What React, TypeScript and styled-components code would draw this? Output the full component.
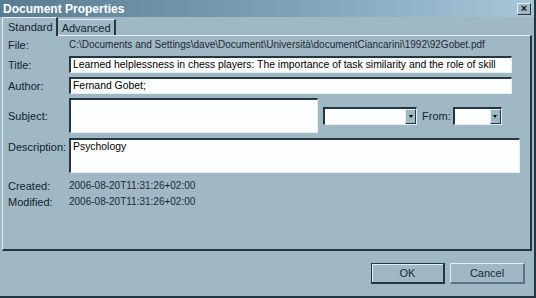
import styled, { createGlobalStyle } from "styled-components";

const Face = "#a0b7c4";
const Light = "#e4eef4";
const Shadow = "#5d7382";
const Dark = "#253640";

const GlobalStyle = createGlobalStyle`
  html, body {
    margin: 0;
    padding: 0;
    background: ${Face};
  }
  * {
    box-sizing: border-box;
  }
`;

const Window = styled.div`
  width: 536px;
  height: 298px;
  display: flex;
  flex-direction: column;
  background: ${Face};
  border-right: 2px solid ${Dark};
  border-bottom: 2px solid ${Dark};
  font-family: "Liberation Sans", Arial, sans-serif;
  color: #14232c;
  overflow: hidden;
`;

const TitleBar = styled.div`
  height: 17px;
  flex: none;
  display: flex;
  align-items: center;
  justify-content: space-between;
  padding: 0 3px 0 3px;
  background: linear-gradient(to right, #5a7c93 0%, #7fa2b9 55%, #a8c6d9 100%);
  color: #fff;
  font-size: 12px;
  font-weight: 700;
`;

const CloseButton = styled.div`
  width: 14px;
  height: 12px;
  display: flex;
  align-items: center;
  justify-content: center;
  background: ${Face};
  border-top: 1px solid ${Light};
  border-left: 1px solid ${Light};
  border-right: 1px solid ${Dark};
  border-bottom: 1px solid ${Dark};
  color: #111;
  font-size: 11px;
  font-weight: 700;
  line-height: 1;
`;

const Body = styled.div`
  padding: 0 2px 0 2px;
  display: flex;
  flex-direction: column;
`;

const TabStrip = styled.div`
  height: 18px;
  display: flex;
  align-items: flex-end;
  position: relative;
  z-index: 1;
`;

const Tab = styled.div<{ $active?: boolean }>`
  height: ${(p) => (p.$active ? "19px" : "16px")};
  margin-bottom: ${(p) => (p.$active ? "-1px" : "0")};
  padding: 0 3px 0 ${(p) => (p.$active ? "5px" : "3px")};
  display: flex;
  align-items: center;
  font-size: 11px;
  background: ${Face};
  border-top: 1px solid ${Light};
  border-left: 1px solid ${(p) => (p.$active ? Light : "transparent")};
  border-right: 2px solid ${Dark};
`;

const Panel = styled.div`
  height: 216px;
  border-top: 1px solid ${Light};
  border-left: 1px solid ${Light};
  border-right: 2px solid ${Dark};
  border-bottom: 2px solid ${Dark};
  padding: 2px 0 0 5px;
  display: flex;
  flex-direction: column;
`;

const Row = styled.div<{ $top?: number; $align?: string }>`
  display: flex;
  align-items: ${(p) => p.$align ?? "center"};
  margin-top: ${(p) => p.$top ?? 0}px;
`;

const Label = styled.div<{ $pad?: number }>`
  width: 61px;
  flex: none;
  font-size: 11px;
  line-height: 14px;
  padding-top: ${(p) => p.$pad ?? 0}px;
`;

const Value = styled.div`
  font-size: 10px;
  line-height: 14px;
  color: #1c2a33;
  white-space: nowrap;
`;

const Field = styled.div<{ $w: number; $h: number }>`
  width: ${(p) => p.$w}px;
  height: ${(p) => p.$h}px;
  flex: none;
  background: #fdfeff;
  border-top: 2px solid ${Dark};
  border-left: 2px solid ${Dark};
  border-right: 1px solid ${Light};
  border-bottom: 1px solid ${Light};
  padding: 0 2px;
  font-size: 10.4px;
  line-height: 14px;
  color: #000;
  white-space: nowrap;
  overflow: hidden;
`;

const Select = styled.div<{ $w: number; $gap: number }>`
  width: ${(p) => p.$w}px;
  height: 18px;
  margin-left: ${(p) => p.$gap}px;
  display: flex;
  justify-content: flex-end;
  background: #fdfeff;
  border-top: 2px solid ${Dark};
  border-left: 2px solid ${Dark};
  border-right: 1px solid ${Light};
  border-bottom: 1px solid ${Light};
`;

const Arrow = styled.div`
  width: 11px;
  height: 15px;
  display: flex;
  align-items: center;
  justify-content: center;
  background: ${Face};
  border-top: 1px solid ${Light};
  border-left: 1px solid ${Light};
  border-right: 1px solid ${Dark};
  border-bottom: 1px solid ${Dark};
  &::after {
    content: "";
    border-left: 2px solid transparent;
    border-right: 2px solid transparent;
    border-top: 3px solid #000;
  }
`;

const FromLabel = styled.div`
  margin-left: 5px;
  font-size: 11px;
`;

const Footer = styled.div`
  flex: 1;
  display: flex;
  justify-content: flex-end;
  gap: 5px;
  padding: 12px 9px 0 0;
`;

const Button = styled.div<{ $default?: boolean }>`
  width: ${(p) => (p.$default ? 74 : 75)}px;
  height: 21px;
  display: flex;
  align-items: center;
  justify-content: center;
  font-size: 11px;
  color: #1a2a33;
  background: ${Face};
  border-top: 1px solid ${(p) => (p.$default ? Dark : Light)};
  border-left: 1px solid ${(p) => (p.$default ? Dark : Light)};
  border-right: 2px solid ${(p) => (p.$default ? Dark : Shadow)};
  border-bottom: 2px solid ${(p) => (p.$default ? Dark : Shadow)};
  box-shadow: ${(p) => (p.$default ? `inset 1px 1px 0 ${Light}` : "none")};
`;

export default function App() {
  return (
    <>
      <GlobalStyle />
      <Window>
        <TitleBar>
          <span>Document Properties</span>
          <CloseButton>×</CloseButton>
        </TitleBar>
        <Body>
          <TabStrip>
            <Tab $active>Standard</Tab>
            <Tab>Advanced</Tab>
          </TabStrip>
          <Panel>
            <Row>
              <Label>File:</Label>
              <Value>
                C:\Documents and Settings\dave\Document\Università\documentCiancarini\1992\92Gobet.pdf
              </Value>
            </Row>
            <Row $top={4}>
              <Label>Title:</Label>
              <Field $w={443} $h={17}>
                Learned helplessness in chess players: The importance of task similarity and the role of skill
              </Field>
            </Row>
            <Row $top={4}>
              <Label>Author:</Label>
              <Field $w={443} $h={17}>
                Fernand Gobet;
              </Field>
            </Row>
            <Row $top={4}>
              <Label>Subject:</Label>
              <Field $w={249} $h={35} />
              <Select $w={94} $gap={5}>
                <Arrow />
              </Select>
              <FromLabel>From:</FromLabel>
              <Select $w={49} $gap={2}>
                <Arrow />
              </Select>
            </Row>
            <Row $top={5} $align="flex-start">
              <Label $pad={2}>Description:</Label>
              <Field $w={451} $h={35}>
                Psychology
              </Field>
            </Row>
            <Row $top={6}>
              <Label>Created:</Label>
              <Value>2006-08-20T11:31:26+02:00</Value>
            </Row>
            <Row $top={2}>
              <Label>Modified:</Label>
              <Value>2006-08-20T11:31:26+02:00</Value>
            </Row>
          </Panel>
        </Body>
        <Footer>
          <Button $default>OK</Button>
          <Button>Cancel</Button>
        </Footer>
      </Window>
    </>
  );
}
